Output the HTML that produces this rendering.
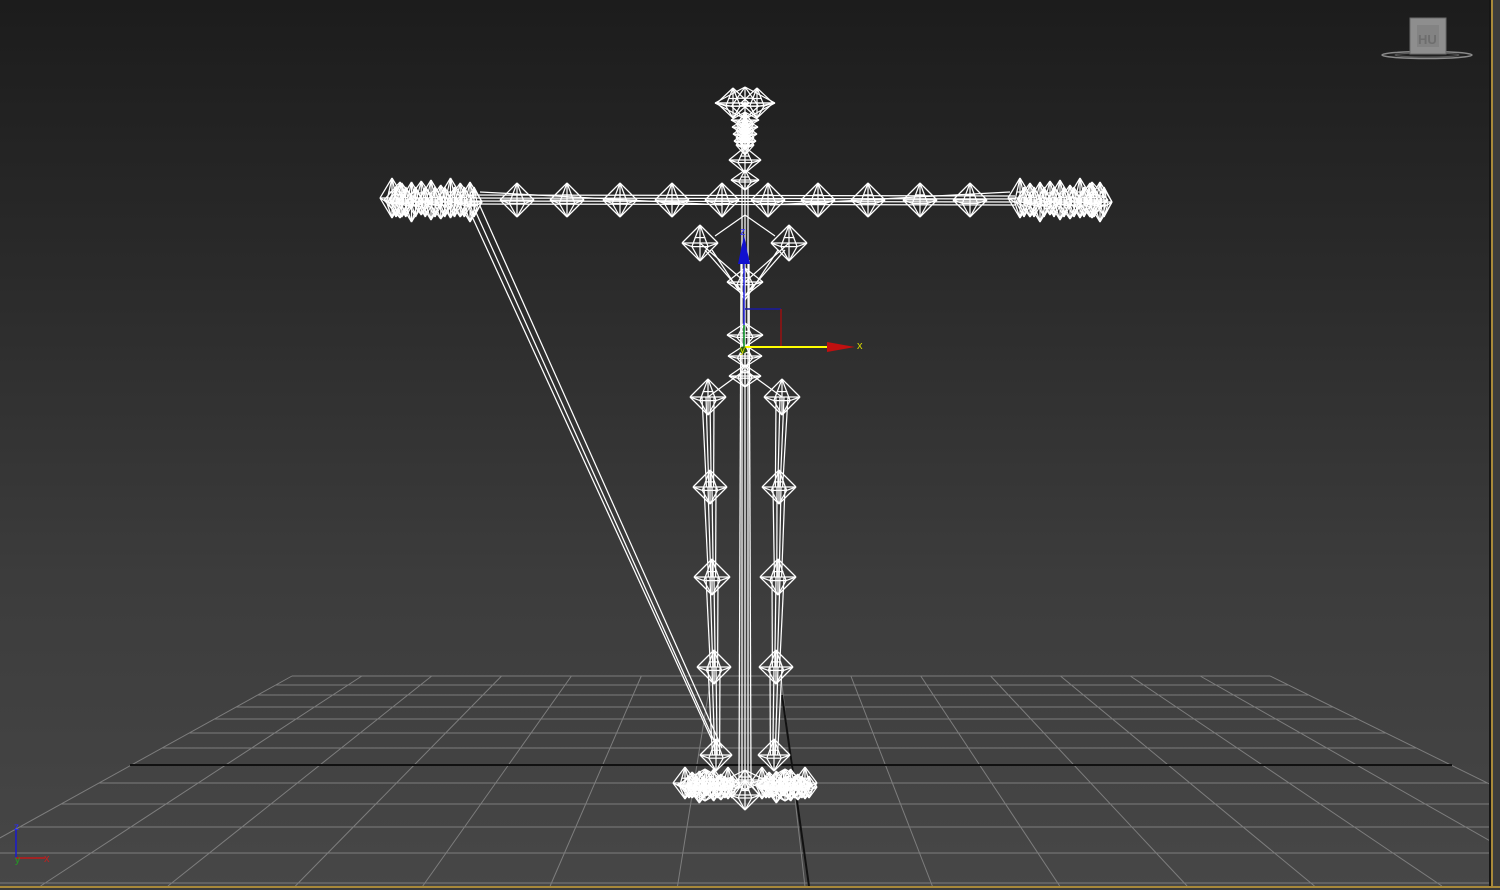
<!DOCTYPE html>
<html><head><meta charset="utf-8">
<style>
html,body{margin:0;padding:0;width:1500px;height:890px;overflow:hidden;background:#2a2a2a}
#vp{position:absolute;left:0;top:0;width:1500px;height:890px;background:linear-gradient(#1c1c1c 0%,#2a2a2a 30%,#3c3c3c 65%,#474747 100%)}
svg{position:absolute;left:0;top:0}
</style></head><body>
<div id="vp"></div>
<svg id="s" width="1500" height="890" viewBox="0 0 1500 890" font-family="Liberation Sans, sans-serif">
<g id="grid" stroke="#7d7d7d" stroke-width="1" fill="none"></g>
<line x1="130" y1="765" x2="1452" y2="765" stroke="#111" stroke-width="2"/>
<line x1="782" y1="695" x2="809" y2="886" stroke="#111" stroke-width="2"/>
<g id="bones" stroke="#fff" stroke-width="1.25" fill="none"></g>
<!-- gizmo -->
<line x1="745" y1="309" x2="781" y2="309" stroke="#1a1aa0" stroke-width="1.5"/>
<line x1="781" y1="309" x2="781" y2="347" stroke="#9a1010" stroke-width="1.5"/>
<line x1="744" y1="348" x2="744" y2="240" stroke="#2020e0" stroke-width="1.5"/>
<polygon points="744,235 738,264 750,264" fill="#1010d0"/>
<line x1="745" y1="347" x2="830" y2="347" stroke="#ffff00" stroke-width="2"/>
<polygon points="855,347 827,342 827,352" fill="#c01010"/>
<line x1="744" y1="347" x2="744" y2="325" stroke="#20b020" stroke-width="1.5"/>
<circle cx="743" cy="350" r="3.5" fill="#2a5a10"/>
<text x="857" y="349" fill="#d8d800" font-size="11">x</text>
<text x="740" y="235" fill="#3030ff" font-size="11">z</text>
<text x="740" y="353" fill="#e0e000" font-size="10">y</text>
<!-- corner axes -->
<line x1="16" y1="829" x2="16" y2="858" stroke="#1a1ad0" stroke-width="1.5"/>
<line x1="16" y1="858" x2="45" y2="858" stroke="#c01818" stroke-width="1.5"/>
<text x="14" y="830" fill="#2a2aff" font-size="10">z</text>
<text x="44" y="862" fill="#c02020" font-size="11">x</text>
<text x="15" y="863" fill="#20a020" font-size="10">y</text>
<!-- viewcube -->
<ellipse cx="1427" cy="55" rx="45" ry="3.5" fill="none" stroke="#8a8a8a" stroke-width="1.5"/>
<ellipse cx="1427" cy="55" rx="32" ry="2" fill="none" stroke="#5a5a5a" stroke-width="1"/>
<rect x="1410" y="18" width="36" height="36" fill="#8e8e8e" stroke="#6a6a6a"/>
<rect x="1417" y="25" width="22" height="22" fill="#838383"/>
<text x="1418" y="44" fill="#6e6e6e" font-size="13" font-weight="bold">HU</text>
<!-- borders -->
<rect x="1489" y="0" width="2" height="890" fill="#161616"/>
<rect x="1491" y="0" width="2" height="890" fill="#a8893a"/>
<rect x="1493" y="0" width="7" height="890" fill="#3c3c3c"/>
<rect x="0" y="886" width="1500" height="2" fill="#a8893a"/>
<rect x="0" y="888" width="1500" height="2" fill="#3a3a3a"/>
</svg>
<script>
var NS="http://www.w3.org/2000/svg";
function L(g,a,b,c,d,col,w){var l=document.createElementNS(NS,"line");l.setAttribute("x1",a);l.setAttribute("y1",b);l.setAttribute("x2",c);l.setAttribute("y2",d);if(col)l.setAttribute("stroke",col);if(w)l.setAttribute("stroke-width",w);g.appendChild(l);}
var G=document.getElementById("grid");
var vx=752,vy=421;
var ys=[676,685,695,707,719,733,748,783,804,827,853,883];
function xAt(xk,y){return vx+(xk-vx)*(y-vy)/(676-vy);}
ys.forEach(function(y){var a=Math.max(0,xAt(292,y)),b=Math.min(1489,xAt(1270,y));L(G,a,y,b,y);});
for(var k=0;k<=14;k++){var xk=292+k*69.86;var y2=886;L(G,xk,676,xAt(xk,y2),y2);}
var B=document.getElementById("bones");
function oct(cx,cy,w,h){
 L(B,cx,cy-h,cx+w,cy);L(B,cx+w,cy,cx,cy+h);L(B,cx,cy+h,cx-w,cy);L(B,cx-w,cy,cx,cy-h);
 L(B,cx,cy-h,cx,cy+h);L(B,cx-w,cy,cx+w,cy);
 var a=w*0.45,b=h*0.2;
 L(B,cx,cy-h,cx-a,cy+b);L(B,cx,cy-h,cx+a,cy+b);L(B,cx,cy+h,cx-a,cy+b);L(B,cx,cy+h,cx+a,cy+b);
 L(B,cx-w,cy,cx-a,cy+b);L(B,cx+w,cy,cx+a,cy+b);L(B,cx-a,cy+b,cx+a,cy+b);
 L(B,cx-w*0.3,cy-h*0.3,cx+w*0.3,cy-h*0.3);
}
function cluster(x0,x1,cy,h,n){for(var i=0;i<n;i++){var x=x0+(x1-x0)*i/(n-1);oct(x,cy+((i%3)-1)*2,12,h-(i%2)*3);oct(x+4,cy+2,8,h-5);}}
// head
oct(733,103,16,15);oct(757,103,16,15);oct(745,103,30,16);
for(var j=0;j<4;j++){oct(745,120+j*7,14-j,8);oct(745,124+j*7,9,10);}
oct(745,160,16,13);oct(745,180,14,10);
// arms
var ay=200;
for(var i=0;i<4;i++){L(B,470,ay-5+i*3,1015,ay-4+i*3);}
L(B,480,192,722,205);L(B,770,205,1010,192);
[517,567,620,672,722,768,818,868,920,970].forEach(function(x){oct(x,ay,17,17);});
cluster(392,470,200,20,9);oct(400,200,16,18);
cluster(1020,1100,200,20,9);oct(1092,200,16,18);
// spine & clavicles
[-3,0,3].forEach(function(i){L(B,745+i,185,745+i,790);});
L(B,741,260,739,780);L(B,749,260,751,780);
oct(700,243,18,18);oct(789,243,18,18);
L(B,700,243,745,282);L(B,789,243,745,282);L(B,712,250,745,300);L(B,778,250,745,300);L(B,715,236,745,215);L(B,775,236,745,215);
L(B,705,250,740,290);L(B,785,250,750,290);
oct(745,282,18,14);oct(745,335,18,12);oct(745,356,17,11);oct(745,376,16,11);
// legs
var lx=[708,710,712,714,716],rx=[782,779,778,776,774],ly=[397,487,577,667,755],lw=[18,17,18,17,16];
for(var i=0;i<5;i++){oct(lx[i],ly[i],lw[i],lw[i]);oct(rx[i],ly[i],lw[i],lw[i]);}
for(var i=0;i<4;i++){[-6,-2,2,6].forEach(function(d){L(B,lx[i]+d,ly[i],lx[i+1]+d*0.6,ly[i+1]);L(B,rx[i]+d,ly[i],rx[i+1]+d*0.6,ly[i+1]);});}
L(B,708,397,745,370);L(B,782,397,745,370);
// feet
cluster(685,728,785,16,7);cluster(762,805,785,16,7);oct(705,785,28,16);oct(785,785,28,16);oct(745,795,15,15);oct(745,780,20,10);
// long diagonals
L(B,474,208,716,745);L(B,480,206,722,748);L(B,470,212,712,740);
</script>
</body></html>
